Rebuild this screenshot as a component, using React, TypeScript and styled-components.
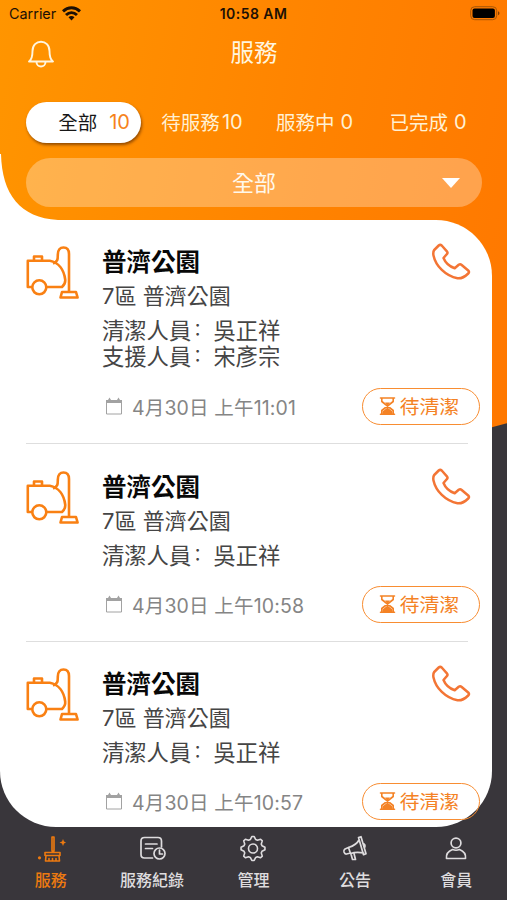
import React from "react";
import styled, { createGlobalStyle } from "styled-components";

const Global = createGlobalStyle`
  * { box-sizing: border-box; }
  body { margin: 0; }
  body, button { font-family: Inter, "Noto Sans CJK TC", sans-serif; }
  button { border: 0; background: none; padding: 0; color: inherit; }
`;

const Screen = styled.div`
  width: 507px;
  height: 900px;
  overflow: hidden;
  display: flex;
  flex-direction: column;
  background:
    linear-gradient(165deg, transparent 539.500px, #39363b 540.500px),
    linear-gradient(100deg, #ff9500 0%, #ff8300 50%, #ff7400 100%);
`;

const Header = styled.header`
  height: 219px;
  flex: none;
  display: flex;
  flex-direction: column;
`;

const StatusBar = styled.div`
  height: 27px;
  display: grid;
  grid-template-columns: 1fr auto 1fr;
  align-items: center;
  padding: 0 7px 0 9px;
  color: #1c1005;
`;

const Carrier = styled.div`
  display: flex;
  align-items: center;
  gap: 6px;
  font-size: 14.4px;
`;

const Clock = styled.div`
  padding-right: 2px;
  font-size: 14px;
  font-weight: 600;
  letter-spacing: 0.45px;
`;

const BatteryBox = styled.div`
  display: flex;
  justify-content: flex-end;
`;

const TitleBar = styled.div`
  height: 50px;
  display: grid;
  grid-template-columns: 56px 1fr 56px;
  align-items: center;
  padding: 2px 0 0 27px;
  color: #fff5df;
`;

const Title = styled.h1`
  margin: 0 26px 0 0;
  text-align: center;
  font-size: 23.5px;
  line-height: 28px;
  font-weight: 400;
`;

const Tabs = styled.nav`
  height: 42px;
  margin: 24px 0 0 26px;
  display: grid;
  grid-template-columns: 115px 122px 103px 124px;
  align-items: center;
`;

const Tab = styled.button<{ $active?: boolean; $gap?: number }>`
  height: ${(p) => (p.$active ? 41 : 30)}px;
  display: flex;
  align-items: center;
  justify-content: ${(p) => (p.$active ? "flex-end" : "center")};
  gap: ${(p) => p.$gap ?? 6}px;
  padding: 0 ${(p) => (p.$active ? 11 : 0)}px 1px 0;
  border-radius: 21px;
  font-size: 19.5px;
  white-space: nowrap;
  color: ${(p) => (p.$active ? "#171717" : "#fff0d3")};
  background: ${(p) => (p.$active ? "#fff" : "none")};
  box-shadow: ${(p) => (p.$active ? "1px 2px 3px rgba(90,40,0,.65)" : "none")};
`;

const Count = styled.span<{ $active?: boolean }>`
  padding-top: 1px;
  font-size: 20px;
  color: ${(p) => (p.$active ? "#f6831c" : "inherit")};
`;

const Filter = styled.button`
  width: 456px;
  height: 49px;
  margin: 15px 0 0 26px;
  flex: none;
  display: grid;
  grid-template-columns: 1fr auto 1fr;
  align-items: center;
  border-radius: 25px;
  color: #fff8eb;
  background: rgba(255, 255, 255, 0.3);
  font-size: 22px;

  span { grid-column: 2; padding-bottom: 3px; }
  svg { justify-self: end; margin-right: 22px; }
`;

const Panel = styled.main`
  width: 492px;
  height: 607px;
  flex: none;
  position: relative;
  display: flex;
  flex-direction: column;
  border-radius: 0 56px 56px 56px;
  background: #fff;
  margin-top: 1px;
`;

const Corner = styled.svg`
  position: absolute;
  left: 0;
  top: -66px;
`;

const Job = styled.article<{ $height: number; $top: number }>`
  height: ${(p) => p.$height}px;
  flex: none;
  margin-left: 26px;
  display: grid;
  grid-template-columns: 76px 1fr 48px;
  padding-top: ${(p) => p.$top}px;
`;

const Divider = styled.hr`
  width: 442px;
  height: 1px;
  flex: none;
  border: 0;
  margin: 0 0 0 26px;
  background: #dedede;
`;

const Details = styled.div`
  display: flex;
  flex-direction: column;
  color: #454545;
`;

const Name = styled.h2`
  margin: 2px 0 0;
  font-size: 24.5px;
  line-height: 32px;
  font-weight: 600;
  color: #080808;
`;

const Place = styled.div`
  margin-top: 4px;
  margin-bottom: 8px;
  font-size: 22px;
  line-height: 28px;
`;

const Staff = styled.div`
  height: 26px;
  display: flex;
  align-items: center;
  font-size: 22.3px;
  line-height: 26px;
`;

const Colon = styled.span`
  width: 22.3px;
  padding: 0 0 6px 2px;
  font-size: 17.5px;
  line-height: 20px;
  font-family: "Noto Sans CJK SC", sans-serif;
`;

const Footer = styled.div`
  grid-column: 2 / 4;
  align-self: end;
  height: 38px;
  margin: 0 12px 18px 0;
  display: flex;
  justify-content: space-between;
  align-items: center;
`;

const Time = styled.div`
  display: flex;
  align-items: center;
  gap: 9px;
  padding: 0 0 0 3px;
  font-size: 19.5px;
  letter-spacing: 0.15px;
  color: #858585;
`;

const Status = styled.div`
  width: 118px;
  height: 37px;
  display: flex;
  align-items: center;
  justify-content: center;
  gap: 4px;
  padding: 0 4px 1px 0;
  border: 1.5px solid #f88d32;
  border-radius: 19px;
  font-size: 19.8px;
  color: #f48225;
`;

const BottomNav = styled.nav`
  height: 73px;
  flex: none;
  display: grid;
  grid-template-columns: repeat(5, 1fr);
`;

const NavItem = styled.button<{ $active?: boolean }>`
  display: flex;
  flex-direction: column;
  align-items: center;
  padding-top: 8px;
  font-size: 16px;
  line-height: 26px;
  font-weight: 500;
  white-space: nowrap;
  color: ${(p) => (p.$active ? "#ed7a10" : "#dedcde")};

  svg { margin-bottom: 4px; }
`;

const line = { fill: "none", stroke: "currentColor", strokeLinecap: "round", strokeLinejoin: "round" } as const;

const Wifi = () => (
  <svg width="19" height="15" viewBox="0 0 19 15" fill="none" stroke="#1c1005" strokeWidth="3">
    <path d="M1 5.300C6 .7 13 .7 18 5.300M4 9c3.300-3 7.700-3 11 0" />
    <path d="M6.500 11.200c1.800-1.500 4.200-1.500 6 0l-3 3.200z" fill="#1c1005" stroke="none" />
  </svg>
);

const Battery = () => (
  <svg width="30" height="15" viewBox="0 0 30 15">
    <rect x=".7" y=".7" width="26" height="13" rx="4" fill="none" stroke="#a75708" />
    <rect x="2.500" y="2.500" width="22.400" height="9.400" rx="2" />
    <path d="M28 5.200c2 .8 2 3.200 0 4z" fill="#873f00" />
  </svg>
);

const Bell = () => (
  <svg width="28" height="29" viewBox="0 0 28 29" {...line} strokeWidth="1.900">
    <path d="M2 22.500c3-2 3.500-5 3.500-10.500C5.500 6 9.500 2.700 14 2.700S22.500 6 22.500 12c0 5.500.5 8.500 3.500 10.500ZM9.500 23c0 6 9 6 9 0" />
  </svg>
);

const Vacuum = () => (
  <svg width="54" height="56" viewBox="0 0 54 56" fill="none" stroke="#f98013" strokeWidth="2.600" strokeLinejoin="round">
    <path d="M6 41H1.800V14.700h22C33 16.500 38 24.500 39.200 33.500q.5 4-3.200 7.500H21M8 14.500v-4h8v4M27 17.700c5-2.500 4.800-4.500 4.800-9C31.800 4 34 1.500 37.500 1.500S43 4 43 8V46" />
    <circle cx="13.300" cy="41.300" r="7" />
    <path d="M36 46h14l1.600 5.500H34.500Z" />
  </svg>
);

const Phone = () => (
  <svg width="40" height="38" viewBox="0 0 40 38" {...line} strokeWidth="2.500">
    <path d="M2.200 7 6.700 2.500q1.500-1.300 3 0l5.200 5.800q1.300 1.500-.2 3L11.500 15c2 5 6 8.500 11.200 10.200l4-3.400q1.500-1 3 .2l6.500 5.500q1.500 1.500 0 3C32.500 34.200 29.500 35.700 25.500 35.300 13.500 33 3.700 23 1.500 12.500 1 10 1.200 8.500 2.200 7Z" />
  </svg>
);

const Calendar = () => (
  <svg width="18" height="20" viewBox="0 0 18 20" fill="none" stroke="#a2a2a2">
    <path d="M1.500 5.500h15v12.500h-15Z" />
    <path d="M1 4h2l1.500-2.500L6 4h6l1.500-2.500L15 4h2v3H1Z" fill="#a2a2a2" stroke="none" />
  </svg>
);

const Hourglass = () => (
  <svg width="17" height="20" viewBox="0 0 17 20" {...line} strokeWidth="1.600">
    <path d="M1.500 2h14M1.500 18.200h14M2.800 2v3.500l11.400 9v3.700M14.200 2v3.500l-11.400 9v3.700" />
    <path d="m8.500 11.500 5 4V18h-10v-2.500ZM6 6.500h5l-2.500 3Z" fill="currentColor" stroke="none" />
  </svg>
);

const Broom = () => (
  <svg width="30" height="28" viewBox="0 0 30 28" {...line} strokeWidth="1.600">
    <path d="M16 2v14h2V2ZM9 17.500h15v3H9ZM10 20.500 9.500 26h14l-.5-5.500M13 26v-2.500M16.500 26v-2.500M20 26v-2.500" />
    <path d="m27 4 1 2.500 2 1-2 1L27 11l-1-2.500-2.500-1L26 6.500Z" fill="currentColor" stroke="none" />
    <circle cx="3.500" cy="22.800" r="1.600" fill="currentColor" stroke="none" />
  </svg>
);

const Records = () => (
  <svg width="28" height="28" viewBox="0 0 28 28" {...line} strokeWidth="1.700">
    <path d="M14.500 23H6.500Q3 23 3 19.500V6q0-3.500 3.500-3.500h13.500Q23.500 2.500 23.500 6v6M7.500 9h11.500M7.500 13.500h7" />
    <circle cx="21.500" cy="18.500" r="5.500" />
    <path d="M21.500 15v4h3" />
  </svg>
);

const gearPath = Array.from({ length: 32 }, (_, i) => {
  const a = ((i - 0.5) / 32) * Math.PI * 2;
  const r = i % 4 < 2 ? 12 : 9.400;
  return `${i ? "L" : "M"}${14 + r * Math.cos(a)} ${13.500 + r * Math.sin(a)}`;
}).join("") + "Z";

const Gear = () => (
  <svg width="28" height="28" viewBox="0 0 28 28" {...line} strokeWidth="1.600">
    <path d={gearPath} />
    <circle cx="14" cy="13.500" r="4.500" />
  </svg>
);

const Megaphone = () => (
  <svg width="28" height="28" viewBox="0 0 28 28" {...line} strokeWidth="1.700">
    <path d="M17.500 2.500 20 1.700l5 17-2.500 1ZM18 5c-2 4-6 6-10.500 7.500L9.500 18.500c4.500-1.500 8.500-1.500 13-.5M7.500 12.500 4 14q-1.500 1-1 3 .8 2.300 2.500 2l4-1M10 19l1.500 5.500h3L13 18.500M22 8.500q3 1 1.500 4.500" />
  </svg>
);

const Person = () => (
  <svg width="28" height="28" viewBox="0 0 28 28" {...line} strokeWidth="1.700">
    <circle cx="14" cy="8" r="4.900" />
    <path d="M4.500 23.500c-.5-4 2-7.500 6-9q3.500 1.500 7 0c4 1.500 6.500 5 6 9Z" />
  </svg>
);

const PhoneBox = styled.div`
  color: #f37535;
  margin: -1px 0 0 -12px;
`;

const IconBox = styled.div`
  margin-top: 2px;
`;

const jobs = [
  { time: "4月30日 上午11:01", staff: [["清潔人員", "吳正祥"], ["支援人員", "宋彥宗"]], height: 223, top: 24 },
  { time: "4月30日 上午10:58", staff: [["清潔人員", "吳正祥"]], height: 197, top: 25 },
  { time: "4月30日 上午10:57", staff: [["清潔人員", "吳正祥"]], height: 196, top: 24 },
];

const navItems = [
  { label: "服務", Icon: Broom },
  { label: "服務紀錄", Icon: Records },
  { label: "管理", Icon: Gear },
  { label: "公告", Icon: Megaphone },
  { label: "會員", Icon: Person },
];

export default function App() {
  return (
    <>
      <Global />
      <Screen>
        <Header>
          <StatusBar>
            <Carrier>Carrier <Wifi /></Carrier>
            <Clock>10:58 AM</Clock>
            <BatteryBox><Battery /></BatteryBox>
          </StatusBar>
          <TitleBar><Bell /><Title>服務</Title></TitleBar>
          <Tabs>
            <Tab $active $gap={12}>全部<Count $active>10</Count></Tab>
            <Tab $gap={2}>待服務<Count>10</Count></Tab>
            <Tab>服務中<Count>0</Count></Tab>
            <Tab>已完成<Count>0</Count></Tab>
          </Tabs>
          <Filter>
            <span>全部</span>
            <svg width="18" height="10" viewBox="0 0 18 10"><path d="M0 0h18L9 10Z" fill="#fff" /></svg>
          </Filter>
        </Header>
        <Panel>
          <Corner width="58" height="67" viewBox="0 0 58 67"><path d="M0 0H1C2 40 20 64 58 66V67H0Z" fill="#fff" /></Corner>
          {jobs.map((job, i) => (
            <React.Fragment key={job.time}>
              {i > 0 && <Divider />}
              <Job $height={job.height} $top={job.top}>
                <IconBox><Vacuum /></IconBox>
                <Details>
                  <Name>普濟公園</Name>
                  <Place>7區 普濟公園</Place>
                  {job.staff.map(([role, name]) => (
                    <Staff key={role}>{role}<Colon>：</Colon>{name}</Staff>
                  ))}
                </Details>
                <PhoneBox><Phone /></PhoneBox>
                <Footer>
                  <Time><Calendar />{job.time}</Time>
                  <Status><Hourglass />待清潔</Status>
                </Footer>
              </Job>
            </React.Fragment>
          ))}
        </Panel>
        <BottomNav>
          {navItems.map(({ label, Icon }, i) => (
            <NavItem key={label} $active={i === 0}><Icon />{label}</NavItem>
          ))}
        </BottomNav>
      </Screen>
    </>
  );
}
